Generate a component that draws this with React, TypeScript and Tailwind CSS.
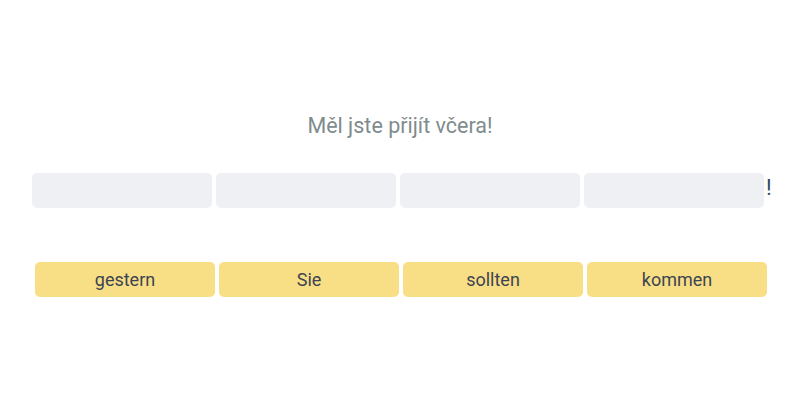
export default function App() {
  const words = ["gestern", "Sie", "sollten", "kommen"];
  return (
    <div className="w-[800px] h-[400px] bg-white" style={{ fontFamily: "Roboto, sans-serif" }}>
      <div className="pt-[110px] text-center text-[21.5px] leading-[32px] text-[#7f8c8d]">Měl jste přijít včera!</div>
      <div className="mt-[31px] flex items-center pl-[32px]">
        <div className="flex gap-[4px]">
          {[0, 1, 2, 3].map((i) => (
            <div key={i} className="w-[180px] h-[35px] rounded-[5px] bg-[#eff0f4]" />
          ))}
        </div>
        <span className="ml-[2px] -mt-[6px] text-[22px] leading-[26px] text-[#34495e]">!</span>
      </div>
      <div className="mt-[54px] flex gap-[4px] pl-[35px]">
        {words.map((w) => (
          <div key={w} className="w-[180px] h-[35px] rounded-[5px] bg-[#f8df86] flex items-center justify-center text-[18px] text-[#3d4451]">
            {w}
          </div>
        ))}
      </div>
    </div>
  );
}
